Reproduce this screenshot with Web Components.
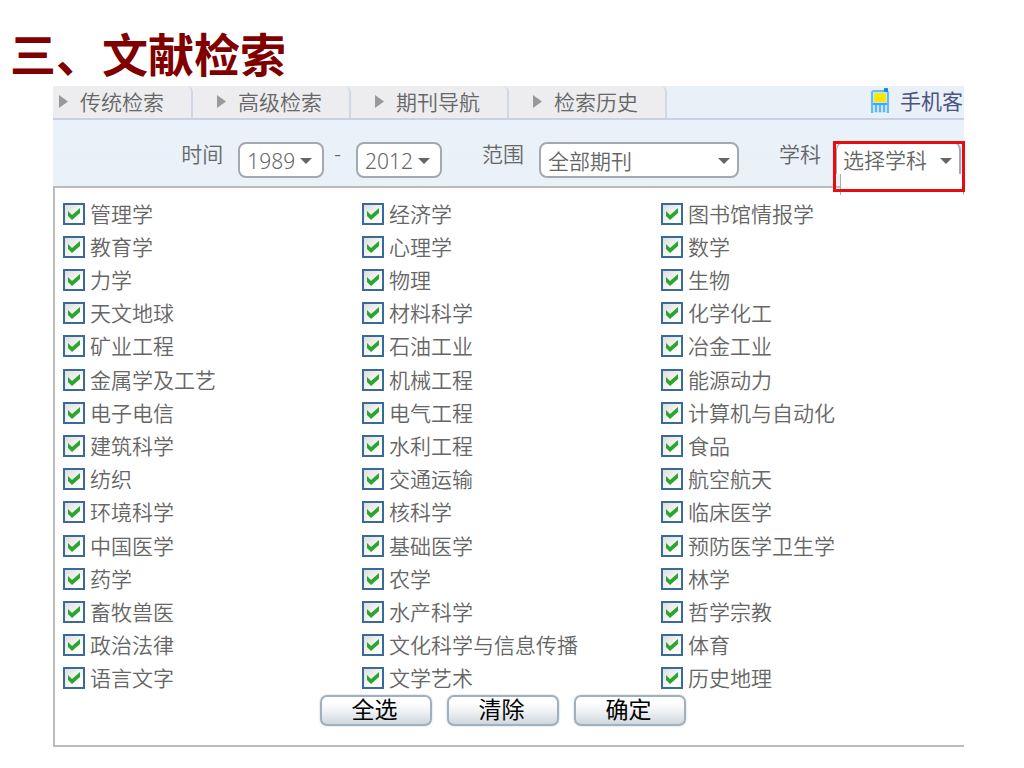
<!DOCTYPE html>
<html lang="zh-CN">
<head>
<meta charset="utf-8">
<title>文献检索</title>
<style>
  body {
    margin: 0;
    background: #fff;
    color: #666;
    font-family: "Noto Sans", "Noto Sans CJK SC", sans-serif;
    font-size: 21px;
    font-weight: 350;
    line-height: 24px;
  }
</style>
</head>
<body>

<search-page>
  <span slot="title">三、文献检索</span>
  <search-tabs slot="tabs">
    <search-tab first>传统检索</search-tab>
    <search-tab>高级检索</search-tab>
    <search-tab>期刊导航</search-tab>
    <search-tab>检索历史</search-tab>
    <mobile-link slot="aside">手机客</mobile-link>
  </search-tabs>
  <filter-bar slot="filters">
    <filter-select label="时间" value="1989" size="year"></filter-select>
    <filter-select label="-" value="2012" size="year" class="until"></filter-select>
    <filter-select label="范围" value="全部期刊" size="scope"></filter-select>
    <filter-select label="学科" value="选择学科" size="subject" open></filter-select>
  </filter-bar>
  <subject-list></subject-list>
</search-page>

<script>
/** Subjects, row by row over the three columns */
const SUBJECTS = [
  '管理学', '经济学', '图书馆情报学',
  '教育学', '心理学', '数学',
  '力学', '物理', '生物',
  '天文地球', '材料科学', '化学化工',
  '矿业工程', '石油工业', '冶金工业',
  '金属学及工艺', '机械工程', '能源动力',
  '电子电信', '电气工程', '计算机与自动化',
  '建筑科学', '水利工程', '食品',
  '纺织', '交通运输', '航空航天',
  '环境科学', '核科学', '临床医学',
  '中国医学', '基础医学', '预防医学卫生学',
  '药学', '农学', '林学',
  '畜牧兽医', '水产科学', '哲学宗教',
  '政治法律', '文化科学与信息传播', '体育',
  '语言文字', '文学艺术', '历史地理'
];

/**
 * Page frame: heading, tabs, filters and content.
 */
class SearchPage extends HTMLElement {
  constructor() {
    super();
    this.attachShadow({ mode: 'open' });
    this.shadowRoot.innerHTML = `
      <style>
        :host { display: block; padding: 24px 0 20px; }
        h1 {
          margin: 0;
          padding: 0 0 2px 10px;
          color: #800000;
          font-size: 46px;
          font-weight: 700;
          line-height: 60px;
        }
        main { margin: 0 60px 0 53px; }
      </style>
      <h1><slot name="title"></slot></h1>
      <main>
        <slot name="tabs"></slot>
        <slot name="filters"></slot>
        <slot></slot>
      </main>
    `;
  }
}

/**
 * Row of tabs with an optional item on the right.
 */
class SearchTabs extends HTMLElement {
  constructor() {
    super();
    this.attachShadow({ mode: 'open' });
    this.shadowRoot.innerHTML = `
      <style>
        :host {
          display: flex;
          justify-content: space-between;
          height: 32px;
          overflow: hidden;
          background: #e9f0f8;
          border-bottom: 2px solid #cbd1e2;
        }
        nav { display: flex; }
      </style>
      <nav><slot></slot></nav>
      <slot name="aside"></slot>
    `;
  }
}

class SearchTab extends HTMLElement {
  constructor() {
    super();
    this.attachShadow({ mode: 'open' });
    this.shadowRoot.innerHTML = `
      <style>
        :host {
          display: block;
          padding: 0 27px 0 24px;
          background: #ededf0;
          border-right: 2px solid #d0d7e6;
          border-top-right-radius: 6px;
        }
        :host([first]) { padding-left: 6px; }
        a {
          display: flex;
          align-items: center;
          gap: 12px;
          height: 32px;
          color: inherit;
          text-decoration: none;
          white-space: nowrap;
        }
        svg { display: block; margin-bottom: 2px; }
      </style>
      <a href="#">
        <svg width="9" height="13" viewBox="0 0 9 13" aria-hidden="true"><path d="M0 0L9 6.5L0 13Z" fill="#999"/></svg>
        <slot></slot>
      </a>
    `;
  }
}

/**
 * Link to the mobile client, with a small phone.
 */
class MobileLink extends HTMLElement {
  constructor() {
    super();
    this.attachShadow({ mode: 'open' });
    this.shadowRoot.innerHTML = `
      <style>
        :host { display: block; padding-right: 1px; }
        a {
          display: flex;
          align-items: center;
          gap: 10px;
          height: 30px;
          color: #4b5380;
          font-weight: 400;
          text-decoration: none;
          white-space: nowrap;
        }
        svg { display: block; }
      </style>
      <a href="#">
        <svg width="19" height="26" viewBox="0 0 19 26" aria-hidden="true">
          <path d="M1 25V5Q1 3 3 3H15Q17 3 17 5V25" fill="#c3e6fb" stroke="#5fbdf6" stroke-width="2"/>
          <rect x="13" y="0" width="4" height="4" rx="1" fill="#1683f0"/>
          <path d="M3 8Q3 5 5 5H13Q15 5 15 8V14H3Z" fill="#ffe600"/>
          <path d="M2 16H16" stroke="#3fa9f5" stroke-width="2"/>
          <path d="M5 17V24M9 17V24M13 17V24" stroke="#5ab6f7" stroke-width="2"/>
        </svg>
        <slot></slot>
      </a>
    `;
  }
}

class FilterBar extends HTMLElement {
  constructor() {
    super();
    this.attachShadow({ mode: 'open' });
    this.shadowRoot.innerHTML = `
      <style>
        :host {
          display: flex;
          justify-content: flex-end;
          gap: 40px;
          height: 44px;
          padding: 22px 3px 0 0;
          background: linear-gradient(#e9f1fa, #eaf1f7);
        }
        ::slotted(.until) { margin-left: -30px; }
      </style>
      <slot></slot>
    `;
  }
}

/**
 * Drop-down with its label on the left.
 */
class FilterSelect extends HTMLElement {
  constructor() {
    super();
    this.attachShadow({ mode: 'open' });
    this.shadowRoot.innerHTML = `
      <style>
        :host { display: flex; gap: 15px; }
        label { white-space: nowrap; }
        .box { position: relative; height: 36px; }
        select {
          display: block;
          appearance: none;
          box-sizing: border-box;
          width: 86px;
          height: 36px;
          margin: 0;
          padding: 2px 0 0 7px;
          border: 2px solid #a3a9b2;
          border-radius: 8px;
          background: #fff;
          color: inherit;
          font: inherit;
        }
        :host([size="scope"]) select { width: 200px; }
        :host([size="subject"]) select { width: 125px; padding-left: 6px; }
        svg { position: absolute; right: 11px; top: 16px; pointer-events: none; }
        :host([size="scope"]) svg { right: 8px; }

        /* open: the box runs down into the list and is outlined */
        :host([open]) select {
          height: 32px;
          border-width: 1px 2px 0 1px;
          border-bottom-left-radius: 0;
          border-bottom-right-radius: 0;
          position: relative;
        }
        :host([open]) svg { right: 8px; }
        :host([open]) .box::before {
          content: "";
          position: absolute;
          left: 4px;
          right: -3px;
          top: 30px;
          height: 23px;
          background: #fff;
          border: solid #a9adb3;
          border-width: 0 1px;
        }
        :host([open]) .box::after {
          content: "";
          position: absolute;
          inset: -1px -4px -14px -3px;
          border: 3px solid #e80c10;
          pointer-events: none;
        }
      </style>
      <label for="field"></label>
      <div class="box">
        <select id="field"><option></option></select>
        <svg width="13" height="7" viewBox="0 0 13 7" aria-hidden="true"><path d="M0 0H12L6 6Z" fill="#666"/></svg>
      </div>
    `;
  }

  connectedCallback() {
    this.shadowRoot.querySelector('label').textContent = this.getAttribute('label');
    this.shadowRoot.querySelector('option').textContent = this.getAttribute('value');
  }
}

/**
 * A ticked subject.
 */
class SubjectOption extends HTMLElement {
  constructor() {
    super();
    this.attachShadow({ mode: 'open' });
    this.shadowRoot.innerHTML = `
      <style>
        :host { display: flex; align-items: center; }
        label { display: flex; align-items: center; gap: 5px; white-space: nowrap; }
        .tick { display: grid; }
        input, svg { grid-area: 1 / 1; }
        input {
          appearance: none;
          box-sizing: border-box;
          width: 22px;
          height: 22px;
          margin: 0;
          border: 2px solid #3a6a99;
          background: linear-gradient(135deg, #dededb, #fff 80%);
        }
        svg { visibility: hidden; pointer-events: none; }
        input:checked + svg { visibility: visible; }
      </style>
      <label>
        <span class="tick">
          <input type="checkbox" checked>
          <svg width="22" height="22" viewBox="0 0 22 22" aria-hidden="true"><path d="M5 8L9 12L17 5V10L9 17L5 13Z" fill="#2ba52f"/></svg>
        </span>
        <slot></slot>
      </label>
    `;
  }
}

class ActionButton extends HTMLElement {
  constructor() {
    super();
    this.attachShadow({ mode: 'open' });
    this.shadowRoot.innerHTML = `
      <style>
        :host { display: block; }
        button {
          display: block;
          box-sizing: border-box;
          width: 112px;
          height: 31px;
          padding: 0 3px 4px 0;
          border: 2px solid #9fb0bf;
          border-radius: 7px;
          background: linear-gradient(#fff 20%, #eef1f4 55%, #cfd7de);
          box-shadow: 0 0 2px #b9c6d2;
          color: #000;
          font: inherit;
          font-size: 23px;
          font-weight: 400;
          line-height: 24px;
        }
      </style>
      <button type="button"><slot></slot></button>
    `;
  }
}

/**
 * Panel with all subjects and the buttons below them.
 */
class SubjectList extends HTMLElement {
  constructor() {
    super();
    this.attachShadow({ mode: 'open' });
    this.shadowRoot.innerHTML = `
      <style>
        :host {
          display: block;
          padding: 9px 4px 19px 8px;
          border: solid #b9bbbd;
          border-width: 2px 0 2px 2px;
          background: #fff;
        }
        .subjects {
          display: grid;
          grid-template-columns: repeat(3, 1fr);
          grid-auto-rows: 1fr;
          min-height: 498px;
        }
        .actions {
          display: flex;
          justify-content: center;
          gap: 15px;
          padding-right: 17px;
        }
      </style>
      <div class="subjects">
        ${SUBJECTS.map(name => `<subject-option>${name}</subject-option>`).join('')}
      </div>
      <div class="actions">
        <action-button>全选</action-button>
        <action-button>清除</action-button>
        <action-button>确定</action-button>
      </div>
    `;
  }
}

/** Define the custom elements */
customElements.define('search-page', SearchPage);
customElements.define('search-tabs', SearchTabs);
customElements.define('search-tab', SearchTab);
customElements.define('mobile-link', MobileLink);
customElements.define('filter-bar', FilterBar);
customElements.define('filter-select', FilterSelect);
customElements.define('subject-option', SubjectOption);
customElements.define('action-button', ActionButton);
customElements.define('subject-list', SubjectList);
</script>
</body>
</html>
